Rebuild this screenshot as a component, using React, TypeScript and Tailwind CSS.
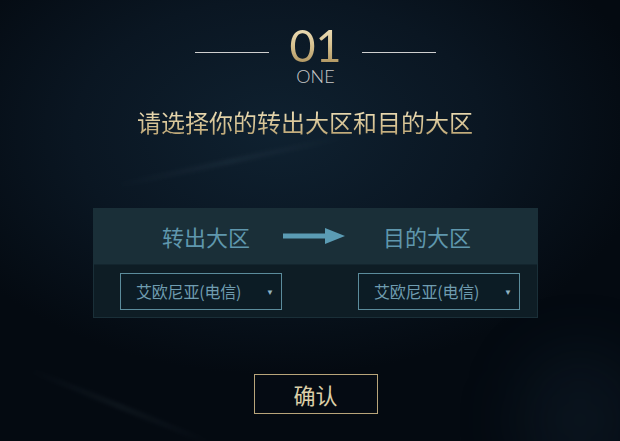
import React from "react";

const cjk = "font-['Microsoft_YaHei','Noto_Sans_CJK_SC',sans-serif]";

function ZoneSelect() {
  return (
    <div className="relative flex h-[37px] w-[162px] items-center border border-[#5b8c9c] bg-[#0c1c25] pl-[15px]">
      <span className={`${cjk} text-[16px] leading-none tracking-[-0.2px] text-[#6f9cb0]`}>
        艾欧尼亚(电信)
      </span>
      <span className="absolute right-[7px] top-[12px] text-[8px] text-[#8fb3c3]">▼</span>
    </div>
  );
}

function Arrow() {
  return (
    <svg width="62" height="18" viewBox="0 0 62 18" className="block">
      <rect x="0" y="6.5" width="44" height="5" fill="#5b9cb4" />
      <polygon points="42,1 62,9 42,17" fill="#5b9cb4" />
    </svg>
  );
}

export default function App() {
  return (
    <div className="relative h-[441px] w-[620px] overflow-hidden bg-[#07111b]">
      {/* background glow and streaks */}
      <div className="absolute inset-0 bg-[radial-gradient(ellipse_60%_55%_at_45%_30%,#0f2130_0%,#0a1622_55%,#040a11_100%)]" />
      <div className="absolute left-[110px] top-[160px] h-[3px] w-[240px] -rotate-[12deg] bg-[linear-gradient(90deg,transparent,rgba(160,190,210,0.10),transparent)] blur-[2px]" />
      <div className="absolute left-[20px] top-[405px] h-[3px] w-[200px] rotate-[22deg] bg-[linear-gradient(90deg,transparent,rgba(160,190,210,0.10),transparent)] blur-[2px]" />
      <div className="absolute left-[520px] top-[350px] h-[140px] w-[120px] rounded-full bg-[rgba(40,70,95,0.16)] blur-[30px]" />

      <div className="relative flex flex-col items-center pl-[11px] pt-[23px]">
        <div className="flex items-center gap-[20px]">
          <div className="mt-[14px] h-px w-[74px] bg-[#cfcfcf]" />
          <div className="bg-[linear-gradient(180deg,#f3e6c2_0%,#d8c290_50%,#a88d58_100%)] bg-clip-text font-['Lato',sans-serif] text-[45px] font-normal leading-[44px] text-transparent">
            01
          </div>
          <div className="mt-[14px] h-px w-[74px] bg-[#cfcfcf]" />
        </div>
        <div className="font-['Lato',sans-serif] text-[18px] font-light leading-[18px] text-[#c9c9c9]">
          ONE
        </div>
        <div
          className={`${cjk} mr-[21px] mt-[22px] bg-[linear-gradient(180deg,#f0e2bc_0%,#d6c394_60%,#b79f6e_100%)] bg-clip-text text-[24px] leading-[30px] text-transparent`}
        >
          请选择你的转出大区和目的大区
        </div>

        <div className="mt-[71px] w-[445px] bg-[#1a2f38]">
          <div className="flex h-[56px] items-center justify-center gap-[36px] pl-[2px]">
            <span className={`${cjk} text-[22px] text-[#5f97ad]`}>转出大区</span>
            <div className="-ml-[3px] mr-[2px]">
              <Arrow />
            </div>
            <span className={`${cjk} text-[22px] text-[#5f97ad]`}>目的大区</span>
          </div>
          <div className="mx-px mb-px flex h-[53px] items-center justify-between border-t border-[#13252e] bg-[#0e1d25] pl-[26px] pr-[17px]">
            <ZoneSelect />
            <ZoneSelect />
          </div>
        </div>

        <button
          type="button"
          className={`${cjk} mt-[56px] flex h-[40px] w-[124px] items-center justify-center border border-[#b8a57a] bg-[#050b13] text-[22px] text-[#dccfa8]`}
        >
          确认
        </button>
      </div>
    </div>
  );
}
